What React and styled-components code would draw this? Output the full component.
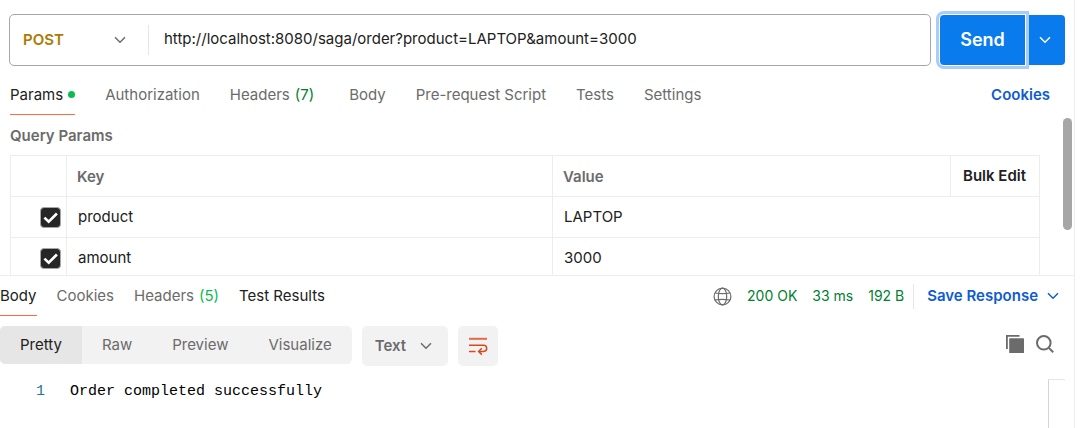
import React, { useState } from 'react';
import styled, { createGlobalStyle } from 'styled-components';

const GlobalStyle = createGlobalStyle`
    * {
        box-sizing: border-box;
    }
    body {
        margin: 0;
        background: #fff;
        color: #212121;
        font-family: Inter, 'Liberation Sans', sans-serif;
        font-size: 15px;
        line-height: 20px;
    }
    button, input, select {
        margin: 0;
        padding: 0;
        border: none;
        background: none;
        color: inherit;
        font: inherit;
    }
    button, select {
        cursor: pointer;
    }
    svg {
        display: block;
        flex: none;
    }
`;

const Page = styled.div`
    min-height: 100vh;
    padding-right: 11px;
`;

const Panel = styled.main`
    display: flex;
    flex-direction: column;
    min-height: 100vh;
    border-right: 1px solid #ededed;
`;

const RequestBar = styled.form`
    display: flex;
    align-items: center;
    gap: 9px;
    padding: 14px 9px 0;
`;

const UrlBox = styled.div`
    display: flex;
    flex: 1;
    align-items: center;
    height: 52px;
    border: 1px solid #a6a6a6;
    border-radius: 5px;
`;

const SelectBox = styled.div`
    display: grid;
    flex: none;
    align-items: center;
    width: ${(props) => props.$width};
    height: 40px;
    border-radius: 5px;
    background: ${(props) => props.$background || 'none'};
    color: #6b6b6b;

    select, svg {
        grid-area: 1 / 1;
    }
    select {
        width: 100%;
        height: 40px;
        padding-left: 13px;
        appearance: none;
        color: ${(props) => props.$color};
        font-weight: 600;
    }
    svg {
        justify-self: end;
        margin-right: ${(props) => props.$inset};
        pointer-events: none;
    }
`;

const Divider = styled.span`
    flex: none;
    width: 1px;
    height: ${(props) => props.$height};
    background: #e6e6e6;
`;

const UrlInput = styled.input`
    flex: 1;
    min-width: 0;
    height: 40px;
    padding: 0 15px 3px;
    outline: none;
`;

const SendGroup = styled.div`
    display: flex;
    height: 50px;
    color: #fff;
`;

const SendButton = styled.button`
    z-index: 1;
    width: 85px;
    border-radius: 4px 0 0 4px;
    background: #097bed;
    box-shadow: 0 0 0 1px #fff, 0 0 0 4px #a9ccfb;
    font-size: 18px;
    font-weight: 600;
`;

const SendMenuButton = styled.button`
    display: flex;
    align-items: center;
    justify-content: flex-end;
    width: 40px;
    padding-right: 14px;
    border-radius: 0 4px 4px 0;
    background: #097bed;
`;

const RequestTabs = styled.nav`
    display: flex;
    align-items: center;
    gap: 30px;
    padding: 9px 24px 0 10px;
`;

const Tab = styled.button`
    display: flex;
    align-items: center;
    height: 40px;
    border-bottom: 1px solid ${(props) => (props.$active ? '#ff6c37' : 'transparent')};
    color: ${(props) => (props.$active || props.$dark ? '#212121' : '#6b6b6b')};
    white-space: nowrap;
`;

const Dot = styled.span`
    width: 7px;
    height: 7px;
    margin-left: 5px;
    border-radius: 50%;
    background: #0cbb52;
`;

const Count = styled.span`
    margin: 0 ${(props) => props.$space || '0'} 0 5px;
    color: ${(props) => props.$color};
`;

const CookiesLink = styled.a`
    margin-left: auto;
    color: #0f5cd0;
    font-weight: 600;
    text-decoration: none;
`;

const ParamsPane = styled.section`
    display: flex;
    justify-content: space-between;
    height: 161px;
    padding-left: 10px;
    border-bottom: 1px solid #ededed;
    overflow: hidden;
`;

const ParamsContent = styled.div`
    flex: 1;
    padding-top: 11px;
`;

const Heading = styled.h2`
    margin: 0 0 9px;
    color: #6b6b6b;
    font-size: 15px;
    font-weight: 600;
    line-height: 20px;
`;

const ParamsTable = styled.table`
    width: 100%;
    border-collapse: collapse;
    table-layout: fixed;

    th, td {
        height: 41px;
        padding: 0 10px;
        border: 1px solid #ededed;
        text-align: left;
    }
    td {
        padding: 0 11px;
    }
    th {
        padding-top: 2px;
        color: #6b6b6b;
        font-weight: 600;
    }
    th:first-child, td:first-child {
        padding: 0 5px;
    }
    th:last-child {
        padding: 0 12px;
    }
`;

const CheckCell = styled.label`
    display: flex;
    justify-content: flex-end;
`;

const Checkbox = styled.input`
    width: 21px;
    height: 21px;
    appearance: none;
    border: 1px solid #a6a6a6;
    border-radius: 4px;
    background: #fff;

    &:checked {
        background: #262626 url("data:image/svg+xml,%3Csvg xmlns='http://www.w3.org/2000/svg' viewBox='0 0 19 19' fill='none' stroke='white' stroke-width='2.6'%3E%3Cpath d='M3.4 9.6l4.3 4.1 8.2-8.2'/%3E%3C/svg%3E") center / 19px 19px;
    }
`;

const BulkEdit = styled.button`
    color: #212121;
    font-weight: 600;
    white-space: nowrap;
`;

const ScrollTrack = styled.div`
    width: 34px;
    padding: 3px 2px 0 23px;
`;

const ScrollThumb = styled.div`
    height: 112px;
    border-radius: 5px;
    background: #a6a6a6;
`;

const ResponseBar = styled.div`
    display: flex;
    align-items: center;
    justify-content: space-between;
    padding-right: 15px;
`;

const ResponseTabs = styled.nav`
    display: flex;
    gap: 20px;
`;

const ResponseInfo = styled.div`
    display: flex;
    align-items: center;
    gap: 15px;
    color: #007f31;
    font-size: 14px;
    white-space: nowrap;
`;

const SaveGroup = styled.div`
    display: flex;
    align-items: center;
    gap: 13px;
    margin-left: -6px;
`;

const SaveButton = styled.button`
    display: flex;
    align-items: center;
    gap: 9px;
    color: #0f5cd0;
    font-size: 15px;
    font-weight: 600;
`;

const Toolbar = styled.div`
    display: flex;
    align-items: flex-start;
    gap: 10px;
    padding: 10px 20px 0 0;
`;

const Segments = styled.div`
    display: flex;
    height: 38px;
    border-radius: 5px;
    background: #f2f2f2;
    overflow: hidden;
`;

const Segment = styled.button`
    padding: 0 20px;
    background: ${(props) => (props.$active ? '#e6e6e6' : 'none')};
    color: ${(props) => (props.$active ? '#212121' : '#6b6b6b')};
`;

const WrapButton = styled.button`
    display: flex;
    align-items: center;
    justify-content: center;
    width: 40px;
    height: 40px;
    border-radius: 5px;
    background: #f2f2f2;
`;

const Tools = styled.div`
    display: flex;
    gap: 12px;
    margin-left: auto;
    padding-top: 9px;
    color: #6b6b6b;
`;

const Editor = styled.div`
    display: flex;
    flex: 1;
    margin-top: 13px;
    padding-right: 9px;
    color: #000;
    font-family: 'Liberation Mono', monospace;
`;

const LineNumber = styled.span`
    width: 70px;
    padding: 3px 25px 0 0;
    color: #237893;
    text-align: right;
`;

const Code = styled.pre`
    flex: 1;
    margin: 0;
    padding-top: 3px;
    font: inherit;
`;

const Ruler = styled.div`
    width: 17px;
    border-top: 1px solid #e6e6e6;
    border-left: 1px solid #d4d4d4;
`;

const Chevron = () => (
    <svg width="12" height="8" viewBox="0 0 12 8" fill="none" stroke="currentColor" strokeWidth="1.5">
        <path d="M1 1.2l5 5 5-5" />
    </svg>
);

const GlobeIcon = () => (
    <svg width="19" height="19" viewBox="0 0 19 19" fill="none" stroke="#6b6b6b" strokeWidth="1.2">
        <circle cx="9.5" cy="9.5" r="8.4" />
        <ellipse cx="9.5" cy="9.5" rx="4.2" ry="8.4" />
        <path d="M2 6q7.5 1.4 15 0M2 13q7.5-1.4 15 0" />
    </svg>
);

const WrapIcon = () => (
    <svg width="20" height="20" viewBox="0 0 20 20" fill="none" stroke="#d9481c" strokeWidth="1.5">
        <path d="M1 2.8h18" strokeWidth="2" opacity="0.8" />
        <path d="M1 9.2h14.6a3.1 3.1 0 0 1 0 6.2H11M1 15.4h6.5" />
        <path d="M13.8 12.2l-3.2 3.2 3.2 3.2" />
    </svg>
);

const CopyIcon = () => (
    <svg width="18" height="18" viewBox="0 0 18 18" fill="currentColor">
        <path d="M0 0h13.5v1.8H1.8v12.2H0z" />
        <rect x="3.2" y="3.2" width="14.8" height="14.8" rx="0.6" />
    </svg>
);

const SearchIcon = () => (
    <svg width="18" height="18" viewBox="0 0 18 18" fill="none" stroke="currentColor" strokeWidth="2">
        <circle cx="7.8" cy="7.8" r="6.8" />
        <path d="M12.6 12.6l4.6 4.6" />
    </svg>
);

const views = ['Pretty', 'Raw', 'Preview', 'Visualize'];

function App() {
    const [url, setUrl] = useState('http://localhost:8080/saga/order?product=LAPTOP&amount=3000');
    const [view, setView] = useState('Pretty');
    const [params, setParams] = useState([
        { key: 'product', value: 'LAPTOP', enabled: true },
        { key: 'amount', value: '3000', enabled: true },
    ]);

    const toggleParam = (key) => {
        setParams(params.map((p) => (p.key === key ? { ...p, enabled: !p.enabled } : p)));
    };

    return (
        <Page>
            <GlobalStyle />
            <Panel>
                <RequestBar onSubmit={(e) => e.preventDefault()}>
                    <UrlBox>
                        <SelectBox $width="138px" $inset="22px" $color="#ad7a03">
                            <select aria-label="Method" defaultValue="POST">
                                <option>GET</option>
                                <option>POST</option>
                                <option>PUT</option>
                                <option>DELETE</option>
                            </select>
                            <Chevron />
                        </SelectBox>
                        <Divider $height="30px" />
                        <UrlInput
                            type="text"
                            aria-label="Request URL"
                            value={url}
                            onChange={(e) => setUrl(e.target.value)}
                        />
                    </UrlBox>
                    <SendGroup>
                        <SendButton type="submit">Send</SendButton>
                        <SendMenuButton type="button" aria-label="Send options">
                            <Chevron />
                        </SendMenuButton>
                    </SendGroup>
                </RequestBar>

                <RequestTabs>
                    <Tab $active>Params <Dot /></Tab>
                    <Tab>Authorization</Tab>
                    <Tab>Headers <Count $color="#007f31" $space="5px">(7)</Count></Tab>
                    <Tab>Body</Tab>
                    <Tab>Pre-request Script</Tab>
                    <Tab>Tests</Tab>
                    <Tab>Settings</Tab>
                    <CookiesLink href="#cookies">Cookies</CookiesLink>
                </RequestTabs>

                <ParamsPane>
                    <ParamsContent>
                        <Heading>Query Params</Heading>
                        <ParamsTable>
                            <colgroup>
                                <col style={{ width: 56 }} />
                                <col />
                                <col style={{ width: 398 }} />
                                <col style={{ width: 89 }} />
                            </colgroup>
                            <thead>
                                <tr>
                                    <th aria-label="Enabled" />
                                    <th>Key</th>
                                    <th>Value</th>
                                    <th><BulkEdit>Bulk Edit</BulkEdit></th>
                                </tr>
                            </thead>
                            <tbody>
                                {params.map((param) => (
                                    <tr key={param.key}>
                                        <td>
                                            <CheckCell>
                                                <Checkbox
                                                    type="checkbox"
                                                    aria-label={param.key}
                                                    checked={param.enabled}
                                                    onChange={() => toggleParam(param.key)}
                                                />
                                            </CheckCell>
                                        </td>
                                        <td>{param.key}</td>
                                        <td colSpan={2}>{param.value}</td>
                                    </tr>
                                ))}
                            </tbody>
                        </ParamsTable>
                    </ParamsContent>
                    <ScrollTrack>
                        <ScrollThumb />
                    </ScrollTrack>
                </ParamsPane>

                <ResponseBar>
                    <ResponseTabs>
                        <Tab $active>Body</Tab>
                        <Tab>Cookies</Tab>
                        <Tab>Headers <Count $color="#0cbb52">(5)</Count></Tab>
                        <Tab $dark>Test Results</Tab>
                    </ResponseTabs>
                    <ResponseInfo>
                        <GlobeIcon />
                        <span>200 OK</span>
                        <span>33 ms</span>
                        <span>192 B</span>
                        <SaveGroup>
                            <Divider $height="25px" />
                            <SaveButton>Save Response <Chevron /></SaveButton>
                        </SaveGroup>
                    </ResponseInfo>
                </ResponseBar>

                <Toolbar>
                    <Segments>
                        {views.map((name) => (
                            <Segment key={name} $active={name === view} onClick={() => setView(name)}>
                                {name}
                            </Segment>
                        ))}
                    </Segments>
                    <SelectBox $width="86px" $inset="16px" $color="#6b6b6b" $background="#f2f2f2">
                        <select aria-label="Response format" defaultValue="Text">
                            <option>JSON</option>
                            <option>XML</option>
                            <option>HTML</option>
                            <option>Text</option>
                        </select>
                        <Chevron />
                    </SelectBox>
                    <WrapButton aria-label="Wrap lines"><WrapIcon /></WrapButton>
                    <Tools>
                        <button aria-label="Copy"><CopyIcon /></button>
                        <button aria-label="Search"><SearchIcon /></button>
                    </Tools>
                </Toolbar>

                <Editor>
                    <LineNumber>1</LineNumber>
                    <Code>Order completed successfully</Code>
                    <Ruler />
                </Editor>
            </Panel>
        </Page>
    );
}

export default App;
